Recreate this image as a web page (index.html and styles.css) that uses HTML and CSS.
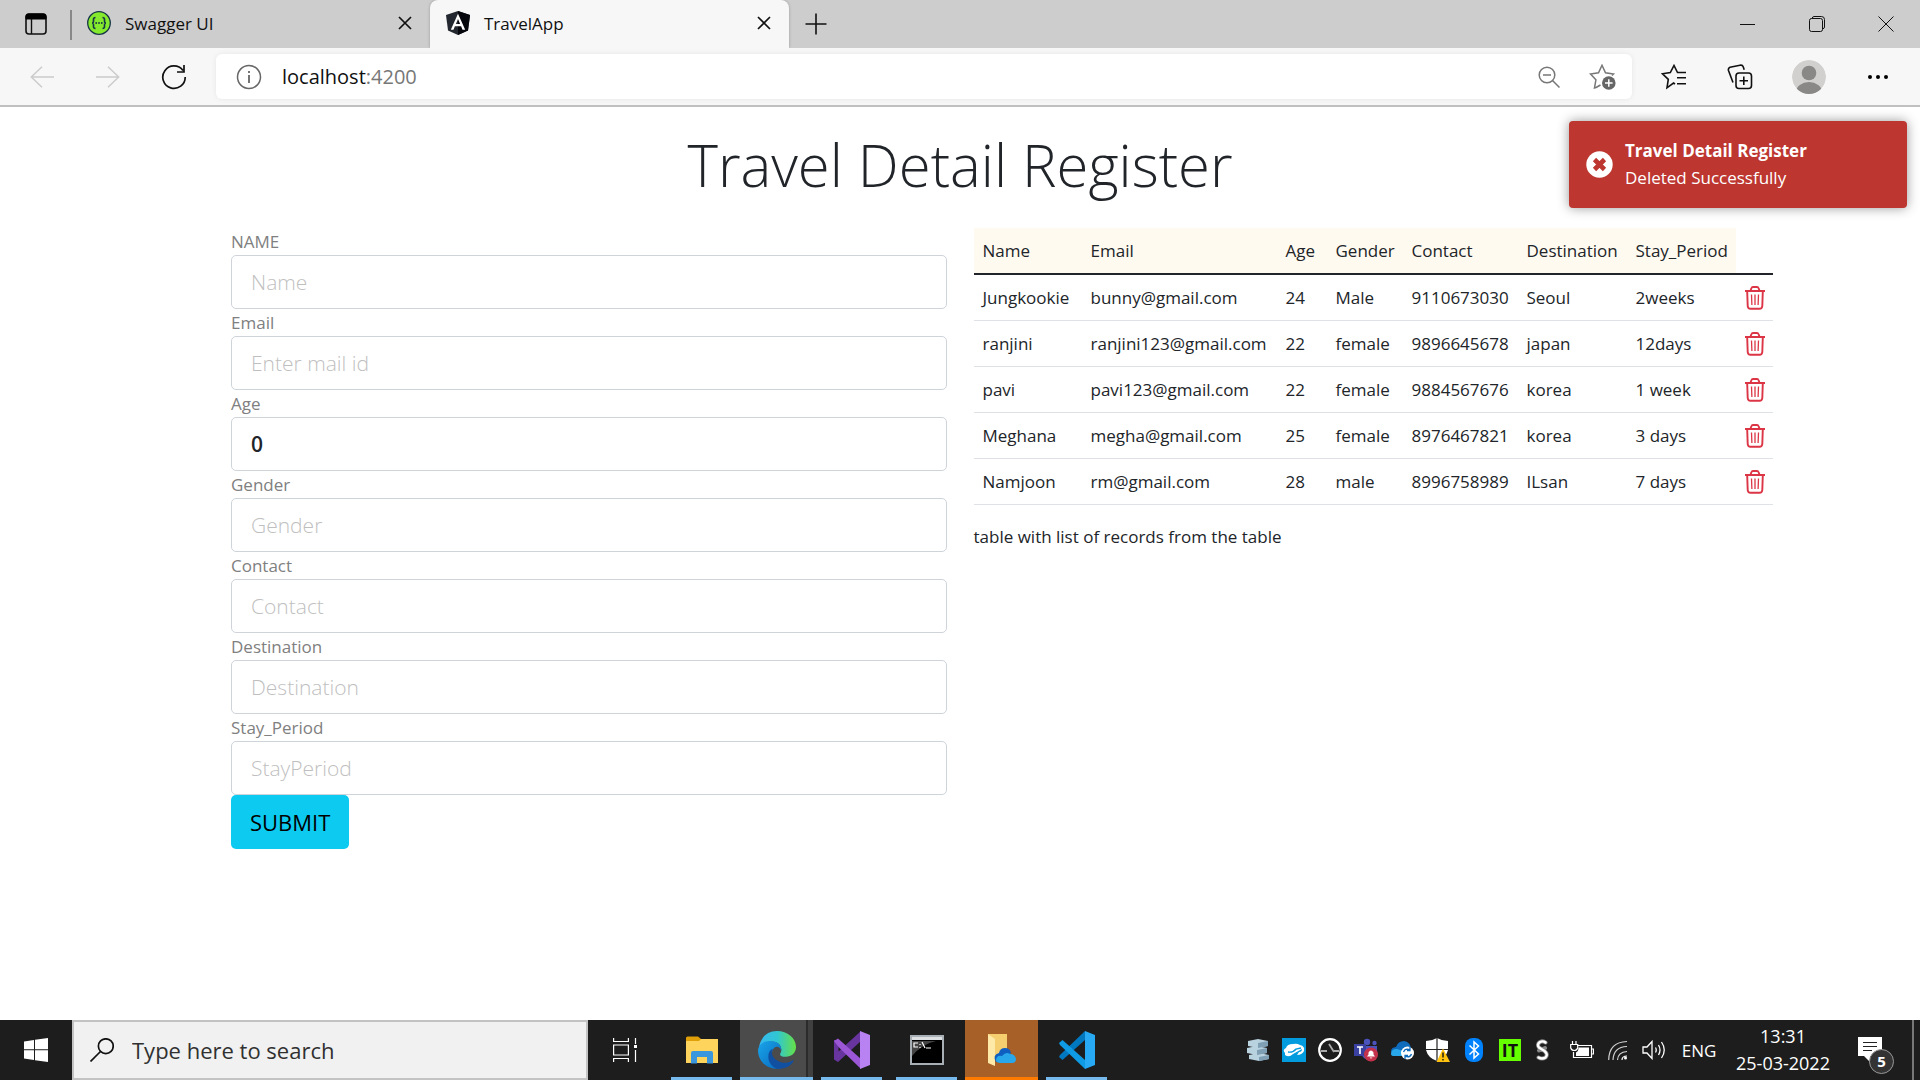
FILE: index.html
```html
<!DOCTYPE html>
<html lang="en">
<head>
<meta charset="utf-8">
<title>TravelApp</title>
<link rel="stylesheet" href="styles.css">
</head>
<body>
<svg class="sprite" aria-hidden="true">
  <symbol id="x" viewBox="0 0 14 14"><path d="M1 1l12 12M13 1L1 13" fill="none" stroke="#111" stroke-width="1.7"/></symbol>
  <symbol id="trash" viewBox="0 0 20 24"><path d="M0 5h20M2.2 5.500l.5 14.500q.2 2.800 2.800 2.800h9q2.600 0 2.800-2.800l.5-14.500M5.500 4.500L6.500 2q.3-1 1.500-1h4q1.200 0 1.500 1l1 2.500" fill="none" stroke="#dc3545" stroke-width="1.900"/><path d="M6.500 8.500l.4 10.500M10 8.500V19M13.500 8.500l-.4 10.500" fill="none" stroke="#dc3545" stroke-width="1.300"/></symbol>
</svg>

<header>
  <div class="tabs">
    <button class="tab-menu" aria-label="Tab actions"><svg width="22" height="22" viewBox="0 0 22 22"><rect x="1" y="1" width="20" height="20" rx="3" fill="none" stroke="#111" stroke-width="1.600"/><path d="M1 6V3.500Q1 1 3.500 1h15Q21 1 21 3.500V6z" fill="#000" stroke="#000"/><path d="M6.500 6v15" stroke="#111" stroke-width="1.400"/></svg></button>
    <div class="tab tab-first">
      <svg width="24" height="24" viewBox="0 0 24 24"><circle cx="12" cy="12" r="11.300" fill="#85ea2d" stroke="#173647" stroke-width="1.300"/><path d="M8.500 6.500Q6.500 6.500 6.500 8.500v1.500q0 2-1.500 2 1.500 0 1.500 2v1.500q0 2 2 2M15.500 6.500q2 0 2 2v1.500q0 2 1.500 2-1.500 0-1.500 2v1.500q0 2-2 2" fill="none" stroke="#173647" stroke-width="1.600"/><g fill="#173647"><circle cx="9.200" cy="12" r=".9"/><circle cx="12" cy="12" r=".9"/><circle cx="14.800" cy="12" r=".9"/></g></svg>
      <span class="tab-title">Swagger UI</span>
      <button class="tab-close" aria-label="Close Swagger UI"><svg width="14" height="14"><use href="#x"/></svg></button>
    </div>
    <div class="tab tab-active">
      <svg width="24" height="24" viewBox="0 0 24 24"><path d="M12 0l12 4-2 15.500L12 24 2 19.500 0 4z" fill="#23272f"/><path d="M12 0l12 4-2 15.500L12 24z" fill="#05070d"/><path d="M12 2.800L4.800 18.800h2.700l1.400-3.600h6.200l1.400 3.600h2.700zm2.100 10.200H9.900L12 7.900z" fill="#fff"/></svg>
      <span class="tab-title">TravelApp</span>
      <button class="tab-close" aria-label="Close TravelApp"><svg width="14" height="14"><use href="#x"/></svg></button>
    </div>
    <button class="tab-new" aria-label="New tab"><svg width="22" height="22" viewBox="0 0 22 22"><path d="M11 .5v21M.5 11h21" stroke="#111" stroke-width="1.600"/></svg></button>
    <div class="window-controls">
      <button aria-label="Minimize"><svg width="16" height="16"><path d="M0 8.500h15" stroke="#111"/></svg></button>
      <button aria-label="Restore"><svg width="16" height="16" fill="none" stroke="#111"><rect x=".5" y="2.500" width="13" height="13" rx="2"/><path d="M3 2.500Q3.500.5 5 .5h7.500q3 0 3 3V11q0 1.500-2 2"/></svg></button>
      <button aria-label="Close window"><svg width="16" height="16"><path d="M.5.500l15 15M15.500.500l-15 15" stroke="#111"/></svg></button>
    </div>
  </div>
  <nav class="toolbar">
    <button class="tool" aria-label="Back"><svg width="24" height="22" viewBox="0 0 24 22"><path d="M24 11H1M12 .7L1.300 11 12 21.300" fill="none" stroke="#ccc" stroke-width="1.500"/></svg></button>
    <button class="tool" aria-label="Forward"><svg width="24" height="22" viewBox="0 0 24 22"><path d="M0 11h23M12 .7L22.700 11 12 21.300" fill="none" stroke="#ccc" stroke-width="1.500"/></svg></button>
    <button class="tool" aria-label="Refresh"><svg width="26" height="26" viewBox="0 0 26 26"><path d="M24.200 13A11.200 11.200 0 1 1 22 6.500M23 1v7h-7" fill="none" stroke="#111" stroke-width="1.700"/></svg></button>
    <div class="address">
      <svg width="26" height="26" viewBox="0 0 26 26"><circle cx="13" cy="13" r="11.500" fill="none" stroke="#666" stroke-width="1.500"/><path d="M13 11v8M13 7v2" stroke="#666" stroke-width="1.800"/></svg>
      <span class="url">localhost<span class="port">:4200</span></span>
      <button class="address-tool" aria-label="Zoom out"><svg width="22" height="22" viewBox="0 0 22 22" fill="none" stroke="#777" stroke-width="1.500"><circle cx="9" cy="9" r="7.800"/><path d="M5 9h8M14.500 14.500l7 7"/></svg></button>
      <button class="address-tool" aria-label="Add to favorites"><svg width="28" height="26" viewBox="0 0 28 26"><path d="M7 23.500l-1.500.5 1.400-8.200L1.500 10l8-1.300L13 1.300l3.500 7.400 8 1.300-1.500 1.500M7 23.500l4.500-2.500" fill="none" stroke="#777" stroke-width="1.500"/><circle cx="19.800" cy="19" r="6.800" fill="#666"/><path d="M19.800 15.200v7.600M16 19h7.600" stroke="#fff" stroke-width="1.500"/></svg></button>
    </div>
    <button class="tool" aria-label="Favorites"><svg width="26" height="26" viewBox="0 0 26 26" fill="none" stroke="#111" stroke-width="1.600"><path d="M14 20l-1.500-1L6 23.800l1.300-8.500L1.500 9.800l7.800-1.300L13 1.500l3.500 7H25M16 13.800h9M16 19.800h9"/></svg></button>
    <button class="tool" aria-label="Collections"><svg width="26" height="26" viewBox="0 0 26 26" fill="none" stroke="#111" stroke-width="1.600"><rect x="9" y="9" width="15.500" height="15.500" rx="3"/><path d="M16.800 12.500v8.500M12.500 16.800H21M6 18.500L1.500 6.500Q.8 4.200 3 3.200L13 1.200q2.500-.5 3.200 1.500l1 3"/></svg></button>
    <button class="tool tool-profile" aria-label="Profile"><svg width="34" height="34" viewBox="0 0 34 34"><clipPath id="c"><circle cx="17" cy="17" r="17"/></clipPath><g clip-path="url(#c)"><circle cx="17" cy="17" r="17" fill="#d2d0ce"/><circle cx="17" cy="13" r="7.300" fill="#8a8886"/><ellipse cx="17" cy="32" rx="13" ry="10" fill="#8a8886"/></g></svg></button>
    <button class="tool" aria-label="Settings and more"><svg width="20" height="4"><circle cx="2" cy="2" r="2"/><circle cx="10" cy="2" r="2"/><circle cx="18" cy="2" r="2"/></svg></button>
  </nav>
</header>

<main>
  <div class="toast" role="alert">
    <svg width="27" height="27" viewBox="0 0 27 27"><circle cx="13.500" cy="13.500" r="13.200" fill="#fff"/><path d="M8.500 8.500l10 10M18.500 8.500l-10 10" stroke="#bd362f" stroke-width="4.600"/></svg>
    <div><strong>Travel Detail Register</strong><p>Deleted Successfully</p></div>
  </div>
  <h1>Travel Detail Register</h1>
  <div class="columns">
    <form class="form">
      <label for="name">NAME</label><input id="name" placeholder="Name">
      <label for="email">Email</label><input id="email" placeholder="Enter mail id">
      <label for="age">Age</label><input id="age" value="0">
      <label for="gender">Gender</label><input id="gender" placeholder="Gender">
      <label for="contact">Contact</label><input id="contact" placeholder="Contact">
      <label for="destination">Destination</label><input id="destination" placeholder="Destination">
      <label for="stay">Stay_Period</label><input id="stay" placeholder="StayPeriod">
      <button type="button" class="submit">SUBMIT</button>
    </form>
    <section class="records">
      <table>
        <colgroup><col class="c-name"><col class="c-email"><col class="c-age"><col class="c-gender"><col class="c-contact"><col class="c-place"><col class="c-place"><col class="c-del"></colgroup>
        <thead><tr><th>Name</th><th>Email</th><th>Age</th><th>Gender</th><th>Contact</th><th>Destination</th><th>Stay_Period</th><td></td></tr></thead>
        <tbody>
          <tr><td>Jungkookie</td><td>bunny@gmail.com</td><td>24</td><td>Male</td><td>9110673030</td><td>Seoul</td><td>2weeks</td><td><button class="delete" aria-label="Delete"><svg width="20" height="24"><use href="#trash"/></svg></button></td></tr>
          <tr><td>ranjini</td><td>ranjini123@gmail.com</td><td>22</td><td>female</td><td>9896645678</td><td>japan</td><td>12days</td><td><button class="delete" aria-label="Delete"><svg width="20" height="24"><use href="#trash"/></svg></button></td></tr>
          <tr><td>pavi</td><td>pavi123@gmail.com</td><td>22</td><td>female</td><td>9884567676</td><td>korea</td><td>1 week</td><td><button class="delete" aria-label="Delete"><svg width="20" height="24"><use href="#trash"/></svg></button></td></tr>
          <tr><td>Meghana</td><td>megha@gmail.com</td><td>25</td><td>female</td><td>8976467821</td><td>korea</td><td>3 days</td><td><button class="delete" aria-label="Delete"><svg width="20" height="24"><use href="#trash"/></svg></button></td></tr>
          <tr><td>Namjoon</td><td>rm@gmail.com</td><td>28</td><td>male</td><td>8996758989</td><td>ILsan</td><td>7 days</td><td><button class="delete" aria-label="Delete"><svg width="20" height="24"><use href="#trash"/></svg></button></td></tr>
        </tbody>
      </table>
      <p>table with list of records from the table</p>
    </section>
  </div>
</main>

<footer class="taskbar">
  <button class="start" aria-label="Start"><svg width="24" height="24" viewBox="0 0 24 24" fill="#fff"><path d="M0 3.400l10-1.400v9.300H0zM11 1.800L24 0v11.300H11zM0 12.300h10V22L0 20.600zM11 12.300h13V24l-13-1.800z"/></svg></button>
  <label class="search"><svg width="24" height="24" viewBox="0 0 24 24" fill="none" stroke="#111" stroke-width="1.700"><circle cx="15.800" cy="8.200" r="7.400"/><path d="M10.500 13.500L.5 23.500"/></svg><input aria-label="Search" placeholder="Type here to search"></label>
  <div class="apps">
    <button class="app task-view" aria-label="Task view"><svg width="24" height="24" viewBox="0 0 24 24" fill="none" stroke="#fff" stroke-width="1.200"><path d="M.6 0v3.500h14.800V0M.6 24v-3.500h14.800V24M.6 7h14.800v10H.6zM22.500 0v6M22.500 12v12"/><path d="M21 7h3v3h-3z" fill="#fff" stroke="none"/></svg></button>
    <button class="app open" aria-label="File Explorer"><svg width="32" height="28" viewBox="0 0 32 28"><path d="M0 2q0-1.500 1.500-1.500H12L15 3v4H0z" fill="#dfa00a"/><path d="M0 5h13l2-2h17v24H0z" fill="#ffd45c"/><path d="M5 27.500V17q0-2 2-2h18q2 0 2 2v10.500h-6V21H11v6.500z" fill="#3a96dd"/></svg></button>
    <button class="app open current" aria-label="Edge"><svg width="38" height="38" viewBox="0 0 36 36"><defs><linearGradient id="g"><stop stop-color="#35b8f1"/><stop offset=".5" stop-color="#31c7d1"/><stop offset="1" stop-color="#66e046"/></linearGradient><linearGradient id="h" y2="1"><stop stop-color="#1aa5ea"/><stop offset="1" stop-color="#0868bd"/></linearGradient></defs><path d="M1 15C2.500 6 9 0 18 0c10 0 18 7 18 15 0 6-4.500 9.500-9.500 9.500-4 0-6-1.300-5.500-2.800C24 17 21 10 13 10 8 10 3 12 1 15z" fill="url(#g)"/><path d="M0 19C0 13 5 9.500 11 9.500c7 0 11.500 3.500 11 9-1-3.500-4-4.500-6-3-5 4-3 13 2 17 3 2.500 5 3 2 3.300C8 36.500 0 28 0 19z" fill="url(#h)"/><path d="M14 17c-3 6 3 13 12 13 3 0 5-1 6.500-2 1-.5 1.500 0 1 1-3 5-9 7-15.500 7C12 33 9 28 10 22c.5-3 2-4.500 4-5z" fill="#114fa0"/></svg></button>
    <button class="app open" aria-label="Visual Studio"><svg width="36" height="38" viewBox="0 0 36 38"><path d="M0 9v19.500L4 31 27 10V0L4.500 20.500V9z" fill="#68349e"/><path d="M0 10l4-2.500L27 28v10L4.500 16z" fill="#9b57d5"/><path d="M26 0l10 4v30l-10 4z" fill="#b982f2"/></svg></button>
    <button class="app open" aria-label="Command Prompt"><svg width="34" height="30" viewBox="0 0 34 30"><rect x="1" y="1" width="32" height="28" fill="#000" stroke="#a9b0b5" stroke-width="2"/><path d="M2 2h30v3H2z" fill="#dce0e2"/><path d="M2 6h24Q12 9 2 21z" fill="#444"/><path d="M8 8H4v4h4M10 9v1M10 12v1M12 7l3 6M16 13h5" fill="none" stroke="#fff" stroke-width="1.200"/></svg></button>
    <button class="app open alert" aria-label="OneDrive folder"><svg width="28" height="32" viewBox="0 0 28 32"><path d="M0 0h19v24H0z" fill="#f5ce70"/><path d="M0 0l7 5v27l-7-3z" fill="#ffe9a8"/><path d="M8 28q-4-7 3-9 1-5 6-5 5 0 6 5l-9 9z" fill="#0f5fc0"/><path d="M8 27q0-6 6-5 4-5 8-2 5 0 6 5 0 4-4 4H12q-3 0-4-2z" fill="#28a8ea"/></svg></button>
    <button class="app open" aria-label="Visual Studio Code"><svg width="36" height="38" viewBox="0 0 36 38"><path d="M0 26l3.500 3L26 9V0L1 24z" fill="#0078bf"/><path d="M0 12l3.500-3L26 29v9L1 14z" fill="#0f9ae4"/><path d="M26 0l10 4v30l-10 4z" fill="#27a9f3"/></svg></button>
  </div>
  <div class="tray">
    <button aria-label="Storage"><svg width="22" height="22" viewBox="0 0 22 22"><path d="M1 2l10-2 10 2v5l-10 2-10-2zM0 9l10-2 10 2v5l-10 2-10-2zM2 16l10-2 10 2v4l-10 2-10-2z" fill="#b9d2df"/><path d="M11 4l10-2v5l-10 2zM10 11l10-2v5l-10 2zM12 18l10-2v4l-10 2z" fill="#7f9fb5"/></svg></button>
    <button aria-label="Zscaler"><svg width="24" height="24" viewBox="0 0 24 24"><path d="M0 0h24v24H0z" fill="#019bde"/><path d="M3 15Q0 12 4 10q1-4 7-4 4-1 7 1 5 1 4 6-2 4-7 4l2-3q3 0 3-3l-9 5q-4 4-8 1z" fill="#fff"/><path d="M6 14q5 1 8-3l5-1" fill="none" stroke="#019bde" stroke-width="1.300"/></svg></button>
    <button aria-label="Time tracker"><svg width="24" height="24" viewBox="0 0 24 24" fill="none"><circle cx="12" cy="12" r="10.800" stroke="#fff" stroke-width="2.200"/><path d="M3 13h6M21 13h-5M11 6l5 8" stroke="#aaa" stroke-width="1.800"/></svg></button>
    <button aria-label="Teams"><svg width="24" height="24" viewBox="0 0 24 24"><g fill="#4b53bc"><circle cx="13" cy="4" r="3.200"/><circle cx="20.500" cy="5" r="2.200"/><path d="M8 8h15v8q-2 5-8 6-6-1-7-5z"/></g><path d="M0 6h12v12H0z" fill="#3940a0"/><path d="M3 9h6M6 9v7" stroke="#fff" stroke-width="1.600"/><circle cx="17" cy="16.500" r="7" fill="#c4314b"/><path d="M13 18.500l1.500-2v-2q2.500-4 5 0v2l1.500 2zM15.500 19.500h3q-1.500 2-3 0" fill="#fff"/></svg></button>
    <button aria-label="OneDrive"><svg width="24" height="20" viewBox="0 0 24 20"><path d="M2 14Q-1 8 6 7q2-6 8-6 6 1 7 7l-8 7z" fill="#0f6cbd"/><path d="M1 14q0-5 6-5l9 3-2 4H4q-3 0-3-2z" fill="#28a8ea"/><circle cx="17.500" cy="13" r="6.500" fill="#fff"/><path d="M13.500 12q1.500-4 6-2.500M21.500 14q-1.500 4-6 2.500M20 7v3.500h-3M15 19v-3.500h3" fill="none" stroke="#0f6cbd" stroke-width="1.300"/></svg></button>
    <button aria-label="Security"><svg width="24" height="24" viewBox="0 0 24 24"><path d="M0 3q6 0 11-3 5 3 11 3v9q-2 8-11 11Q2 20 0 12z" fill="#fff"/><path d="M11 0v23M0 11.500h22" stroke="#222" stroke-width="1.200"/><path d="M17 10.500L24 24H10.500z" fill="#ffc20e"/><path d="M17 14.500v5M17 21v1.500" stroke="#111" stroke-width="1.400"/></svg></button>
    <button aria-label="Bluetooth"><svg width="18" height="24" viewBox="0 0 18 24"><rect width="18" height="24" rx="8" fill="#0082fc"/><path d="M4.500 7.500l9 8.500L9 20V4l4.500 4-9 8.500" fill="none" stroke="#fff" stroke-width="1.500"/></svg></button>
    <button aria-label="IT"><span class="it">IT</span></button>
    <button class="link" aria-label="Link"><svg width="14" height="22" viewBox="0 0 14 22" fill="none" stroke-linecap="round"><path d="M10.500 3.500Q8 1.500 5 3 1.500 5.500 4 8.500L9.500 12q4 3.500 1 6.500-3.500 2-7 0M4 11.500L10 9" stroke="#888" stroke-width="4"/><path d="M10.500 3.500Q8 1.500 5 3 1.500 5.500 4 8.500L9.500 12q4 3.500 1 6.500-3.500 2-7 0" stroke="#fff" stroke-width="2.400"/></svg></button>
    <button aria-label="Battery"><svg width="24" height="18" viewBox="0 0 24 18" fill="none" stroke="#fff" stroke-width="1.200"><path d="M7 4.500h14.500v12H3.500V11M22 8h1.500v5H22M2.500 0v3M6 0v3M.7 3.500h7V7q-1 2.500-3.500 2.500T.7 7z"/><path d="M8.500 6.500H19V15H6v-3.500q2.500-1 2.500-5z" fill="#fff" stroke="none"/></svg></button>
    <button aria-label="Wi-Fi"><svg width="20" height="20" viewBox="0 0 20 20" fill="none" stroke="#fff" stroke-width="1.200"><path d="M.7 20Q1 2 19 1.500M5 20Q5.500 7 19 6.500M9.500 20q.5-8 9.500-8.500" opacity=".8"/><path d="M14 20q0-4 5-4" /><circle cx="17.500" cy="18" r="1.500" fill="#fff" stroke="none"/></svg></button>
    <button aria-label="Volume"><svg width="24" height="20" viewBox="0 0 24 20" fill="none" stroke="#fff" stroke-width="1.300"><path d="M1 7h4l5-5.500v17L5 13H1z"/><path d="M13.500 7.500q1.500 2.500 0 5M16.500 5q3 5 0 10M19.500 2q5.500 8 0 16"/></svg></button>
    <button class="lang">ENG</button>
    <button class="clock"><time>13:31</time><time>25-03-2022</time></button>
    <button class="notices" aria-label="Notifications"><svg width="24" height="26" viewBox="0 0 24 26"><path d="M0 0h24v19H12v6l-6-6H0z" fill="#fff"/><path d="M5 5.500h14M5 9.500h14M5 13.500h9" stroke="#222" stroke-width="1.200"/></svg><span class="badge">5</span></button>
    <button class="desktop" aria-label="Show desktop"></button>
  </div>
</footer>
</body>
</html>
```
FILE: styles.css
```css
* { box-sizing: border-box; }
body {
  margin: 0;
  min-height: 100vh;
  display: flex;
  flex-direction: column;
  background: #fff;
  color: #212529;
  font: 17px/27px "Open Sans", "Noto Sans", sans-serif;
}
button, input { font: inherit; color: inherit; }
button { border: 0; padding: 0; background: none; }
p { margin: 0; }
svg { display: block; flex: none; }
.sprite { width: 0; height: 0; position: absolute; }

/* browser chrome */
.tabs { display: flex; align-items: stretch; height: 48px; background: #cdcdcd; color: #111; }
.tab-menu { display: grid; place-items: center; width: 72px; position: relative; }
.tab-menu::after { content: ""; position: absolute; right: 0; top: 10px; width: 2px; height: 30px; background: #888; }
.tab { display: flex; align-items: center; gap: 14px; padding: 0 18px 2px 16px; width: 359px; }
.tab-first { width: 358px; padding-left: 15px; }
.tab-title { flex: 1; }
.tab-active { background: #f7f7f7; border-radius: 8px 8px 0 0; box-shadow: 0 0 3px #999; clip-path: inset(0 -4px 0 -4px); }
.tab-close { display: grid; place-items: center; }
.tab-new { display: grid; place-items: center; width: 54px; }
.window-controls { display: flex; margin-left: auto; }
.window-controls button { display: grid; place-items: center; width: 69px; }
.toolbar { display: flex; align-items: center; height: 59px; padding: 0 9px; background: #f7f7f7; border-bottom: 2px solid #c0c0c0; }
.tool { display: grid; place-items: center; width: 66px; height: 48px; }
.tool-profile { width: 72px; }
.address { flex: 1; display: flex; align-items: center; gap: 20px; height: 45px; margin: 0 9px; padding: 0 12px 0 20px; background: #fff; border-radius: 6px; box-shadow: 0 0 5px #e6e6e6; }
.url { flex: 1; font-size: 20px; color: #111; }
.port { color: #777; }
.address-tool { display: grid; place-items: center; width: 34px; }

/* page */
main { flex: 1; position: relative; padding-top: 16px; }
h1 { margin: 0; padding-bottom: 21px; font-size: 58px; line-height: 84px; font-weight: 300; text-align: center; }
.columns { display: grid; grid-template-columns: minmax(0, 1fr) minmax(0, 1fr); column-gap: 27px; max-width: 1458px; margin: 0 auto; }
.form { display: flex; flex-direction: column; }
.form label { color: #808080; }
.form input { height: 54px; padding: 0 19px; border: 1px solid #ced4da; border-radius: 5px; background: #fff; font-size: 21px; font-weight: 600; }
.form input::placeholder { color: #bfbfbf; font-weight: 300; opacity: 1; }
.submit { align-self: flex-start; height: 54px; padding: 0 19px; border-radius: 5px; background: #0dcaf0; color: #000; font-size: 22px; }
table { table-layout: fixed; width: 799px; border-spacing: 0; margin-bottom: 18px; }
th, td { padding: 9px; text-align: left; font-weight: 400; white-space: nowrap; }
th { background: #fffaf0; }
thead th, thead td { border-bottom: 2px solid #212529; }
tbody td { border-bottom: 1px solid #dee2e6; }
.c-name { width: 108px; }
.c-email { width: 195px; }
.c-age { width: 50px; }
.c-gender { width: 76px; }
.c-contact { width: 115px; }
.c-place { width: 109px; }
.c-del { width: 37px; }
.delete { display: block; }

.toast { position: absolute; top: 14px; right: 13px; width: 338px; display: flex; align-items: center; gap: 12px; padding: 16px 17px 17px; background: #bd362f; color: #fff; border-radius: 4px; box-shadow: 0 0 12px #999; }
.toast strong { display: block; font-weight: 700; }

/* taskbar */
.taskbar { display: flex; height: 60px; background: #1d1d1d; color: #fff; }
.start { display: grid; place-items: center; width: 72px; }
.search { display: flex; align-items: center; gap: 18px; width: 516px; padding: 0 16px; background: #f1f1f1; border: 2px solid #c3c3c3; }
.search input { flex: 1; min-width: 0; padding: 0; border: 0; background: none; font-size: 22px; }
.search input::placeholder { color: #303030; opacity: 1; }
.apps { display: flex; gap: 2px; }
.app { position: relative; display: grid; place-items: center; width: 73px; }
.task-view { margin-right: 2px; }
.open::after { content: ""; position: absolute; left: 6px; right: 6px; bottom: 0; height: 3px; background: #76b9ed; }
.current { background: linear-gradient(90deg, #4b4b4b 66px, #2b2b2b 66px 68px, #404040 68px); }
.current::after { left: 0; right: 0; }
.alert { background: #a66028; }
.alert::after { left: 0; right: 0; background: #ff7a00; }
.tray { display: flex; margin-left: auto; }
.tray button { display: grid; place-items: center; width: 36px; }
.it { width: 22px; height: 22px; background: #6f0; color: #111; font-size: 18px; line-height: 22px; font-weight: 700; }
.tray .link { padding-right: 8px; }
.tray .lang { width: 54px; font-size: 17px; }
.tray .clock { width: 114px; align-content: center; font-size: 18px; }
.tray .notices { position: relative; width: 72px; padding-right: 12px; }
.badge { position: absolute; left: 29px; top: 29px; width: 25px; height: 25px; border: 1px solid #999; border-radius: 50%; background: #333; font-size: 15px; line-height: 23px; font-weight: 700; text-align: center; }
.tray .desktop { width: 8px; border-left: 2px solid #777; }
```
